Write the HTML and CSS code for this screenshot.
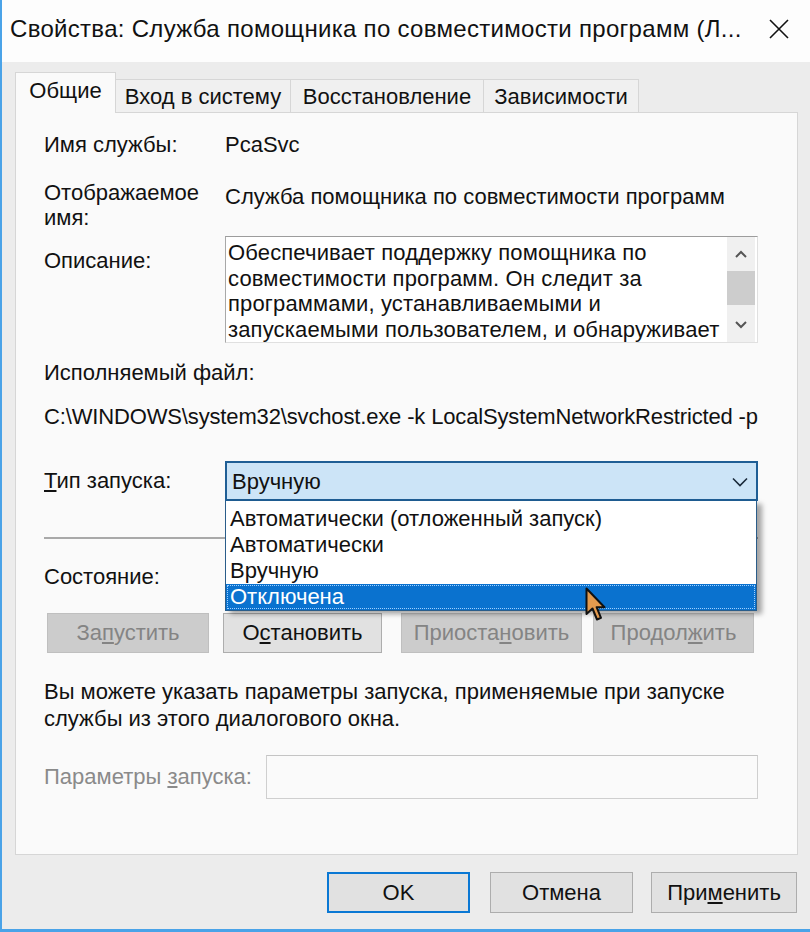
FILE: index.html
```html
<!DOCTYPE html>
<html lang="ru">
<head>
<meta charset="utf-8">
<title>Свойства</title>
<link rel="stylesheet" href="styles.css">
</head>
<body>
<div class="window">
  <div class="titlebar">
    <span class="title">Свойства: Служба помощника по совместимости программ (Л...</span>
    <svg class="close" width="22" height="22" viewBox="0 0 22 22"><path d="M2 2 L20 20 M20 2 L2 20" stroke="#111" stroke-width="1.6" fill="none"/></svg>
  </div>
  <div class="tabs">
    <div class="tab active t1">Общие</div>
    <div class="tab t2">Вход в систему</div>
    <div class="tab t3">Восстановление</div>
    <div class="tab t4">Зависимости</div>
  </div>
  <div class="panel">
    <div class="row r-name">
      <div class="label">Имя службы:</div>
      <div class="value">PcaSvc</div>
    </div>
    <div class="row r-display">
      <div class="label">Отображаемое<br>имя:</div>
      <div class="value">Служба помощника по совместимости программ</div>
    </div>
    <div class="row r-desc">
      <div class="label">Описание:</div>
      <div class="descbox">
        <div class="desctext">Обеспечивает поддержку помощника по<br>совместимости программ. Он следит за<br>программами, устанавливаемыми и<br>запускаемыми пользователем, и обнаруживает</div>
        <div class="scrollbar">
          <div class="sb-btn"><svg width="12" height="8" viewBox="0 0 12 8"><path d="M1 7 L6 2 L11 7" stroke="#555" stroke-width="2" fill="none"/></svg></div>
          <div class="sb-thumb"></div>
          <div class="sb-track"></div>
          <div class="sb-btn"><svg width="12" height="8" viewBox="0 0 12 8"><path d="M1 1 L6 6 L11 1" stroke="#555" stroke-width="2" fill="none"/></svg></div>
        </div>
      </div>
    </div>
    <div class="line r-exe">Исполняемый файл:</div>
    <div class="line r-path">C:\WINDOWS\system32\svchost.exe -k LocalSystemNetworkRestricted -p</div>
    <div class="row r-startup">
      <div class="label"><u>Т</u>ип запуска:</div>
      <div class="combo">
        <span>Вручную</span>
        <svg width="16" height="10" viewBox="0 0 16 10"><path d="M1 1.5 L8 8.5 L15 1.5" stroke="#1b2a3a" stroke-width="1.6" fill="none"/></svg>
      </div>
    </div>
    <div class="sep"></div>
    <div class="line r-state">Состояние:</div>
    <div class="svc-buttons">
      <div class="btn disabled b1">За<u>п</u>устить</div>
      <div class="btn b2">О<u>с</u>тановить</div>
      <div class="btn disabled b3">Приоста<u>н</u>овить</div>
      <div class="btn disabled b4">Продол<u>ж</u>ить</div>
    </div>
    <p class="para">Вы можете указать параметры запуска, применяемые при запуске<br>службы из этого диалогового окна.</p>
    <div class="row r-params">
      <div class="label muted">Параметры <u>з</u>апуска:</div>
      <div class="input"></div>
    </div>

    <div class="dropdown">
      <div class="item">Автоматически (отложенный запуск)</div>
      <div class="item">Автоматически</div>
      <div class="item">Вручную</div>
      <div class="item selected">Отключена</div>
    </div>
    <svg class="cursor" width="24" height="38" viewBox="0 0 24 38">
      <path d="M1.5 1.5 L1.5 27 L7.5 21.5 L12 32.5 L16 30.8 L11.6 20.2 L19.5 20.2 Z" fill="#e39a4e" stroke="#111" stroke-width="2" stroke-linejoin="round"/>
    </svg>
  </div>
  <div class="footer">
    <div class="btn fbtn ok">OK</div>
    <div class="btn fbtn cancel">Отмена</div>
    <div class="btn fbtn apply">При<u>м</u>енить</div>
  </div>
</div>
</body>
</html>
```
FILE: styles.css
```css
* { box-sizing: border-box; }
html, body { margin: 0; padding: 0; }
body {
  font-family: "Liberation Sans", Arial, sans-serif;
  font-size: 22px;
  color: #111;
  background: #ececec;
}
.window {
  width: 810px;
  height: 932px;
  border-left: 2px solid #4aa3e8;
  border-bottom: 3px solid #4aa3e8;
  background: #ececec;
  display: flex;
  flex-direction: column;
  overflow: hidden;
}
.titlebar {
  height: 62px;
  background: #fdfdfd;
  display: flex;
  align-items: center;
  justify-content: space-between;
  padding: 0 20px 4px 8px;
  flex: none;
}
.title { font-size: 24px; color: #111; white-space: nowrap; letter-spacing: 0.3px; }
.close { flex: none; }

.tabs {
  height: 50px;
  display: flex;
  align-items: flex-end;
  padding-left: 13px;
  flex: none;
}
.tab {
  height: 33px;
  border: 1px solid #d6d6d6;
  border-bottom: none;
  background: #f0f0f0;
  display: flex;
  align-items: center;
  justify-content: center;
  margin-left: -1px;
  white-space: nowrap;
  padding-top: 2px;
}
.tab.active {
  height: 41px;
  margin-left: 0;
  margin-bottom: -1px;
  background: #fafafa;
  position: relative;
  z-index: 1;
  padding-top: 0;
  padding-bottom: 4px;
}
.t1 { width: 101px; }
.t2 { width: 176px; }
.t3 { width: 194px; }
.t4 { width: 156px; }

.panel {
  margin-left: 13px;
  width: 783px;
  height: 743px;
  border: 1px solid #d6d6d6;
  background: #fafafa;
  padding: 19px 39px 0 28px;
  position: relative;
  flex: none;
}
.row { display: grid; grid-template-columns: 181px 1fr; }
.line { white-space: nowrap; line-height: 25px; }
.label, .value { white-space: nowrap; }

.r-name { line-height: 26px; }
.r-display { margin-top: 22px; line-height: 25px; }
.r-display .value { padding-top: 4px; }
.r-desc { margin-top: 6px; height: 107px; }
.r-desc .label { padding-top: 12px; line-height: 25px; }
.descbox {
  height: 107px;
  background: #fff;
  border: 1px solid #e0e0e0;
  border-top-color: #9c9c9c;
  border-left-color: #a8a8a8;
  display: grid;
  grid-template-columns: 1fr 28px;
  padding-right: 2px;
  overflow: hidden;
}
.desctext {
  padding: 3px 0 0 2px;
  line-height: 25.5px;
  white-space: nowrap;
  letter-spacing: 0.15px;
}
.scrollbar {
  background: #f0f0f0;
  display: flex;
  flex-direction: column;
}
.sb-btn { height: 34px; display: flex; align-items: center; justify-content: center; flex: none; }
.sb-thumb { height: 34px; background: #cdcdcd; flex: none; }
.sb-track { flex: 1; }

.r-exe { margin-top: 17px; }
.r-path { margin-top: 19px; letter-spacing: -0.15px; }
.r-startup { margin-top: 32px; height: 40px; }
.r-startup .label { line-height: 40px; }
.combo {
  height: 40px;
  background: #cce4f7;
  border: 2px solid #1f5e95;
  display: flex;
  align-items: center;
  justify-content: space-between;
  padding: 2px 8px 0 5px;
}
.sep { margin-top: 36px; height: 2px; background: #a9a9a9; }
.r-state { margin-top: 25px; }

.svc-buttons { margin-top: 24px; display: flex; height: 40px; padding-left: 3px; }
.btn {
  height: 40px;
  background: #e1e1e1;
  border: 1px solid #adadad;
  display: flex;
  align-items: center;
  justify-content: center;
  white-space: nowrap;
}
.btn.disabled { background: #cccccc; border-color: #bfbfbf; color: #848484; }
.b1 { width: 162px; }
.b2 { width: 159px; margin-left: 14px; }
.b3 { width: 181px; margin-left: 19px; }
.b4 { width: 161px; margin-left: 11px; }

.para { margin: 25px 0 0; line-height: 27px; white-space: nowrap; }
.r-params { margin-top: 23px; grid-template-columns: 222px 1fr; height: 44px; }
.r-params .label { line-height: 44px; }
.muted { color: #8a8a8a; }
.input { height: 44px; background: #fafafa; border: 1px solid #cfcfcf; border-top-color: #c4c4c4; }

.dropdown {
  position: absolute;
  left: 209px;
  top: 388px;
  width: 532px;
  height: 110px;
  background: #fff;
  border: 1px solid #2a5d8a;
  border-top: none;
  padding-top: 5px;
  box-shadow: 5px 3px 5px rgba(0,0,0,0.35);
  z-index: 2;
}
.item { height: 26px; line-height: 26px; padding-left: 4px; white-space: nowrap; }
.item.selected {
  background: #0a72cf;
  color: #fff;
  outline: 1px dotted #9fd0ff;
  outline-offset: -2px;
}
.cursor { position: absolute; left: 569px; top: 474px; z-index: 3; }

.footer {
  display: flex;
  justify-content: flex-end;
  padding-right: 13px;
  margin-top: 17px;
}
.fbtn { height: 41px; }
.ok { width: 143px; border: 2px solid #0a78d4; margin-right: 20px; }
.cancel { width: 143px; margin-right: 18px; }
.apply { width: 146px; }
```
